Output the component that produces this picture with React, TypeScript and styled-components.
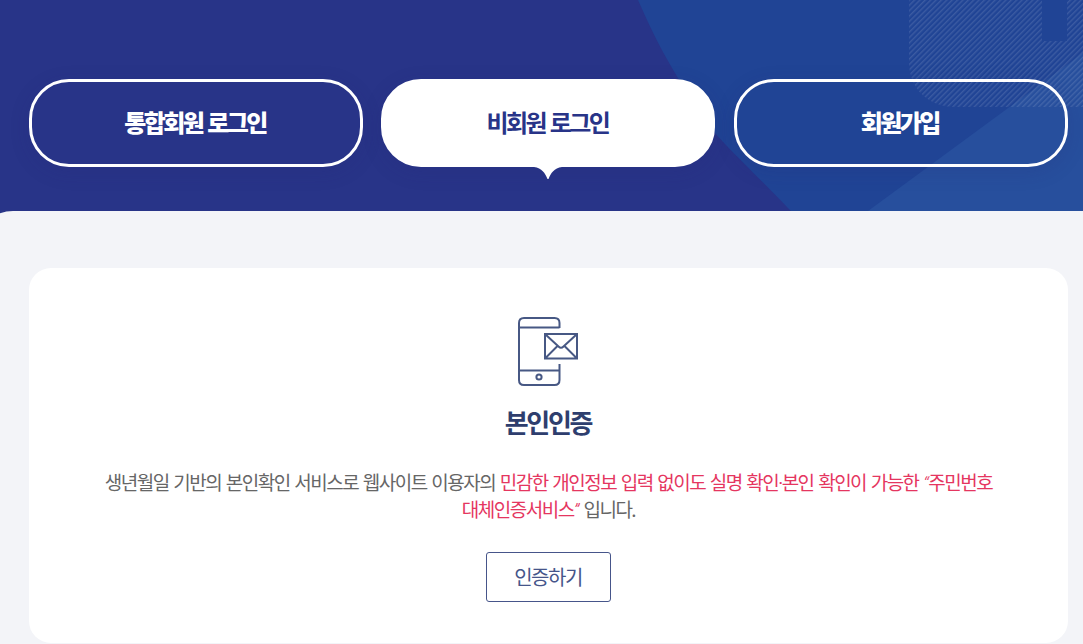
import styled, { createGlobalStyle } from "styled-components";

const GlobalStyle = createGlobalStyle`
  * {
    box-sizing: border-box;
  }

  body {
    background-color: #f3f4f8;
    font-family: "Noto Sans CJK KR", "Noto Sans", sans-serif;
    margin: 0;
    overflow: hidden;
  }
`;

const Page = styled.div`
  background: linear-gradient(#283488 260px, #f3f4f8 260px);
  height: 644px;
  overflow: hidden;
`;

const Hero = styled.header`
  background-color: #283488;
  height: 211px;
  padding: 79px 15px 0 29px;
  position: relative;
`;

const HeroArt = styled.svg`
  display: block;
  left: 0;
  position: absolute;
  top: 0;
`;

const TabList = styled.nav`
  display: grid;
  gap: 18.4px;
  grid-template-columns: repeat(3, 334px);
  position: relative;
`;

const Tab = styled.a<{ $active?: boolean }>`
  align-items: center;
  background-color: ${({ $active }) => ($active ? "#fff" : "transparent")};
  border: 3px solid #fff;
  border-radius: 40px;
  box-shadow: 0 5px 20px rgba(38, 38, 110, 0.16);
  color: ${({ $active }) => ($active ? "#283488" : "#fff")};
  display: flex;
  font-size: 24px;
  font-weight: ${({ $active }) => ($active ? 700 : 900)};
  height: 88px;
  justify-content: center;
  letter-spacing: -2.6px;
  padding: 0 2px 3px 0;
  position: relative;
  word-spacing: 2px;
`;

const TabPointer = styled.svg`
  left: 50%;
  margin-left: -15px;
  position: absolute;
  top: 84px;
`;

const Main = styled.main`
  background-color: #f3f4f8;
  border-top-left-radius: 40px;
  margin-left: -27px;
  padding: 57px 15px 0 56px;
`;

const Card = styled.section`
  align-items: center;
  background-color: #fff;
  border-radius: 22px;
  display: flex;
  flex-direction: column;
  height: 375px;
  padding-top: 49px;
`;

const CardTitle = styled.h2`
  color: #2e3e6e;
  font-size: 26px;
  font-weight: 700;
  letter-spacing: -2.3px;
  line-height: 40px;
  margin: 15px 0 0;
  padding-right: 1px;
`;

const Description = styled.p`
  color: #666;
  font-size: 19px;
  letter-spacing: -1.5px;
  line-height: 27px;
  margin: 26px 0 0;
  text-align: center;
  width: 900px;
  word-spacing: 1.8px;
`;

const Highlight = styled.span`
  color: #e5365f;
`;

const Quote = styled.span`
  font-family: Roboto, sans-serif;
  font-style: italic;
  font-weight: 300;
  letter-spacing: -0.5px;
  line-height: 0;
`;

const MiddleDot = styled.span`
  font-family: Roboto, sans-serif;
  line-height: 0;
`;

const VerifyButton = styled.button`
  background-color: #fff;
  border: 1px solid #46558a;
  border-radius: 3px;
  color: #46558a;
  font-family: inherit;
  font-size: 20px;
  height: 50px;
  letter-spacing: -1.5px;
  margin-top: 30px;
  padding: 0 1px 2px 0;
  width: 125px;
`;

const HeroBackground = () => (
  <HeroArt width="1083" height="211" viewBox="0 0 1083 211">
    <defs>
      <pattern
        id="hatch"
        width="3.8"
        height="3.8"
        patternUnits="userSpaceOnUse"
        patternTransform="rotate(-45)"
      >
        <rect width="3.8" height="1.4" fill="#fff" fillOpacity="0.12" />
      </pattern>
    </defs>
    <path
      d="M638 0C652 32 664 55 678 78C690 99 700 116 715 133C728 148 740 159 791 211H1083V0Z"
      fill="#204495"
    />
    <path d="M868 211 1083 53V211Z" fill="#274f9d" />
    <path
      d="M909 0H1042V41H1067V0H1083V107H955C930 107 909 90 909 62Z"
      fill="url(#hatch)"
    />
  </HeroArt>
);

const PhoneMailIcon = () => (
  <svg
    width="62"
    height="70"
    viewBox="0 0 62 70"
    fill="none"
    stroke="#475884"
    strokeWidth="2"
  >
    <path d="M41.5 11V6Q41.5 1 36.5 1H6Q1 1 1 6V63Q1 68 6 68H36.5Q41.5 68 41.5 63V47" />
    <path d="M1 10.5H41.5M1 53.5H41.5" />
    <circle cx="21" cy="60" r="2.6" />
    <path d="M27 17H59V41.5H27ZM27 17 40.5 29.5Q43 32 45.5 29.5L59 17M27 41.5 39.5 29M59 41.5 46.5 29" />
  </svg>
);

const App = () => (
  <Page>
    <GlobalStyle />
    <Hero>
      <HeroBackground />
      <TabList>
        <Tab>통합회원 로그인</Tab>
        <Tab $active>
          비회원 로그인
          <TabPointer width="30" height="13" viewBox="0 0 30 13">
            <path
              d="M1 0H29V1C21 2 18 7 15.5 13H14.5C12 7 9 2 1 1Z"
              fill="#fff"
            />
          </TabPointer>
        </Tab>
        <Tab>회원가입</Tab>
      </TabList>
    </Hero>
    <Main>
      <Card>
        <PhoneMailIcon />
        <CardTitle>본인인증</CardTitle>
        <Description>
          생년월일 기반의 본인확인 서비스로 웹사이트 이용자의{" "}
          <Highlight>
            민감한 개인정보 입력 없이도 실명 확인<MiddleDot>·</MiddleDot>본인
            확인이 가능한 <Quote>“</Quote>주민번호
            <br />
            대체인증서비스<Quote>”</Quote>
          </Highlight>{" "}
          입니다.
        </Description>
        <VerifyButton>인증하기</VerifyButton>
      </Card>
    </Main>
  </Page>
);

export default App;
